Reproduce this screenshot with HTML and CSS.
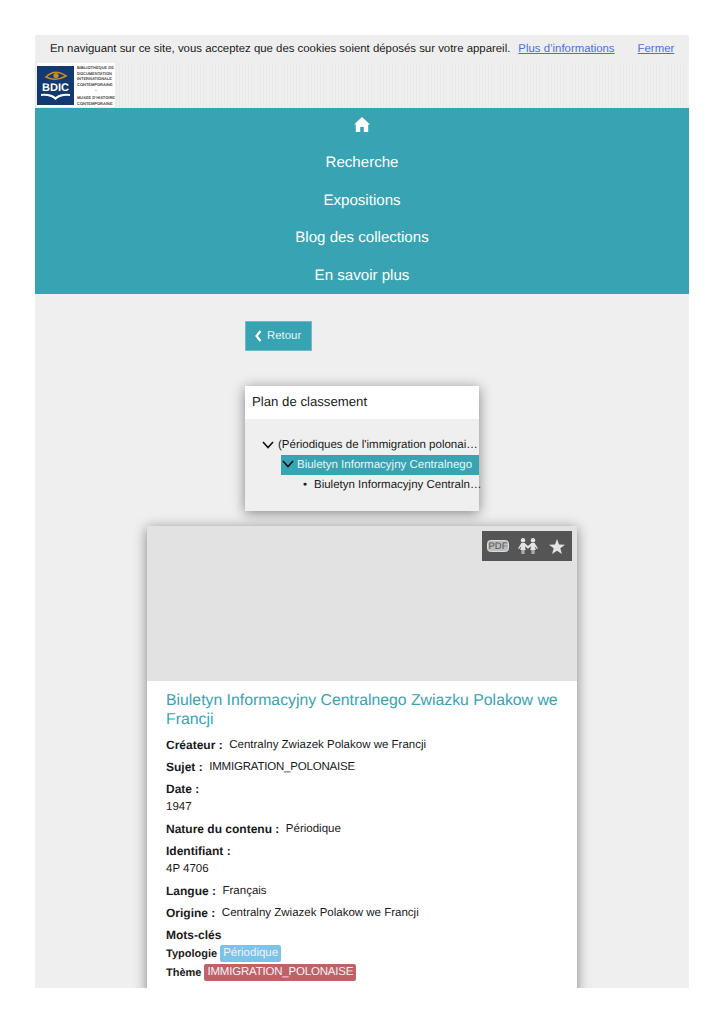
FILE: index.html
```html
<!DOCTYPE html>
<html lang="fr">
<head>
    <meta charset="UTF-8">
    <title>Biuletyn Informacyjny Centralnego Zwiazku Polakow we Francji</title>
    <link rel="stylesheet" href="styles.css">
</head>
<body>
<div class="page">

    <div class="cookies">
        <span class="cookies-text">En naviguant sur ce site, vous acceptez que des cookies soient déposés sur votre appareil.</span>
        <a href="#" class="cookies-more">Plus d’informations</a>
        <a href="#" class="cookies-close">Fermer</a>
    </div>

    <div class="header">
        <div class="logo">
            <svg class="logo-mark" width="37" height="39" viewBox="0 0 37 39">
                <rect width="37" height="39" fill="#123a70"/>
                <path d="M9 11 Q18 2 29 10 Q19 16 9 11Z" fill="none" stroke="#c98a2b" stroke-width="1.6"/>
                <circle cx="19" cy="9.5" r="2.6" fill="#c98a2b"/>
                <text x="18.5" y="25" class="logo-bdic">BDIC</text>
                <path d="M4 28 Q13 27 18.5 31 Q24 27 33 28 L33 30 Q24 29 18.5 34 Q13 29 4 30Z" fill="#fff"/>
            </svg>
            <div class="logo-text">
                <div>BIBLIOTHEQUE DE</div>
                <div>DOCUMENTATION</div>
                <div>INTERNATIONALE</div>
                <div>CONTEMPORAINE</div>
                <div class="logo-dot">•</div>
                <div>MUSEE D'HISTOIRE</div>
                <div>CONTEMPORAINE</div>
            </div>
        </div>
    </div>

    <div class="nav">
        <a href="#" class="nav-home">
            <svg width="16" height="15" viewBox="0 0 16 15">
                <path d="M8 0 L16 7.6 L14.2 7.6 L14.2 15 L9.8 15 L9.8 10 L6.2 10 L6.2 15 L1.8 15 L1.8 7.6 L0 7.6Z" fill="#fff"/>
            </svg>
        </a>
        <a href="#">Recherche</a>
        <a href="#">Expositions</a>
        <a href="#">Blog des collections</a>
        <a href="#">En savoir plus</a>
    </div>

    <div class="content">
        <a href="#" class="btn-back">
            <svg width="7" height="12" viewBox="0 0 7 12">
                <path d="M5.5 1 L1.5 6 L5.5 11" fill="none" stroke="#fff" stroke-width="2.2"/>
            </svg>
            Retour
        </a>

        <div class="tree">
            <div class="tree-title">Plan de classement</div>
            <div class="tree-body">
                <div class="tree-row tree-level1">
                    <svg class="chevron" width="12" height="8" viewBox="0 0 12 8"><path d="M1 1 L6 6.5 L11 1" fill="none" stroke="#111" stroke-width="1.6"/></svg>
                    <span>(Périodiques de l'immigration polonai…</span>
                </div>
                <div class="tree-row tree-level2">
                    <svg class="chevron" width="12" height="8" viewBox="0 0 12 8"><path d="M1 1 L6 6.5 L11 1" fill="none" stroke="#111" stroke-width="1.6"/></svg>
                    <span>Biuletyn Informacyjny Centralnego</span>
                </div>
                <div class="tree-row tree-level3">
                    <span class="tree-bullet">•</span>
                    <span>Biuletyn Informacyjny Centraln…</span>
                </div>
            </div>
        </div>

        <div class="notice">
            <div class="notice-image">
                <div class="tools">
                    <svg width="22" height="12" viewBox="0 0 22 12">
                        <rect x="0.5" y="0.5" width="21" height="11" rx="3" fill="#bdbdbd" stroke="#dcdcdc"/>
                        <text x="11" y="9.4" class="tools-pdf">PDF</text>
                    </svg>
                    <svg width="20" height="16" viewBox="0 0 20 16">
                        <g fill="#e4e4e4">
                            <circle cx="5" cy="2.2" r="2.2"/>
                            <circle cx="15" cy="2.2" r="2.2"/>
                            <path d="M3.4 5 H6.6 L10 8 L13.4 5 H16.6 L20 10.4 L18.9 11.1 L16.8 8.2 L17.8 12 H16.4 V16 H15.4 V12 H14.6 V16 H13.6 V12 H12.2 L13.2 8.2 L10 10.8 L6.8 8.2 L7.8 12 H6.4 V16 H5.4 V12 H4.6 V16 H3.6 V12 H2.2 L3.2 8.2 L1.1 11.1 L0 10.4Z"/>
                        </g>
                    </svg>
                    <svg width="16" height="15" viewBox="0 0 16 15">
                        <path d="M8 0 L10 5.4 L16 5.7 L11.3 9.3 L12.9 15 L8 11.8 L3.1 15 L4.7 9.3 L0 5.7 L6 5.4Z" fill="#e4e4e4"/>
                    </svg>
                </div>
            </div>
            <div class="notice-body">
                <h1>Biuletyn Informacyjny Centralnego Zwiazku Polakow we Francji</h1>
                <div class="field"><span class="field-name">Créateur :</span><span class="field-value">Centralny Zwiazek Polakow we Francji</span></div>
                <div class="field"><span class="field-name">Sujet :</span><span class="field-value caps">IMMIGRATION_POLONAISE</span></div>
                <div class="field field-block"><div class="field-name">Date :</div><div class="field-value">1947</div></div>
                <div class="field"><span class="field-name">Nature du contenu :</span><span class="field-value">Périodique</span></div>
                <div class="field field-block"><div class="field-name">Identifiant :</div><div class="field-value">4P 4706</div></div>
                <div class="field"><span class="field-name">Langue :</span><span class="field-value">Français</span></div>
                <div class="field"><span class="field-name">Origine :</span><span class="field-value">Centralny Zwiazek Polakow we Francji</span></div>
                <div class="keywords-title">Mots-clés</div>
                <div class="keyword-row"><span class="keyword-name">Typologie</span><span class="tag tag-blue">Périodique</span></div>
                <div class="keyword-row"><span class="keyword-name">Thème</span><span class="tag tag-red caps">IMMIGRATION_POLONAISE</span></div>
            </div>
        </div>
    </div>

</div>
</body>
</html>
```

FILE: styles.css
```css
html, body {
    margin: 0;
    padding: 0;
    background-color: #fff;
}

body {
    font-family: "Liberation Sans", Arial, sans-serif;
    color: #1a1a1a;
    padding: 35px 35px 0;
    text-rendering: geometricPrecision;
}

.page {
    width: 654px;
    height: 953px;
    overflow: hidden;
    background-color: #efefef;
}

.cookies {
    height: 28px;
    background-color: #eee;
    font-size: 11.4px;
    line-height: 28px;
    padding-left: 15px;
    display: flex;
    white-space: nowrap;
}

.cookies a {
    color: #4a6fe0;
}

.cookies-more {
    margin-left: 8px;
}

.cookies-close {
    margin-left: 23px;
}

.header {
    height: 45px;
    box-sizing: border-box;
    padding: 0 0 0 2px;
    background-color: #ececec;
    background-image: repeating-linear-gradient(90deg, #e9e9e9 0, #e9e9e9 1px, #efefef 1px, #efefef 3px);
}

.logo {
    width: 78px;
    height: 44px;
    background-color: #fff;
    display: flex;
    box-sizing: border-box;
}

.logo-mark {
    margin-top: 3px;
}

.logo-bdic {
    font-size: 11px;
    font-weight: bold;
    fill: #fff;
    text-anchor: middle;
}

.logo-text {
    margin: 2px 0 0 3px;
    font-size: 4px;
    line-height: 5.5px;
    font-weight: bold;
    color: #444;
    white-space: nowrap;
}

.logo-dot {
    color: #e08020;
    text-align: center;
    height: 8px;
    line-height: 8px;
}

.nav {
    height: 186px;
    background-color: #38a3b2;
    display: flex;
    flex-direction: column;
    align-items: center;
}

.nav a {
    color: #fff;
    text-decoration: none;
    font-size: 15.1px;
    height: 37.4px;
    line-height: 38px;
}

.nav .nav-home {
    height: 37px;
    line-height: 0;
    padding-top: 9px;
    box-sizing: border-box;
}

.content {
    padding-top: 27px;
    display: flex;
    flex-direction: column;
    align-items: center;
}

.btn-back {
    align-self: flex-start;
    margin-left: 210px;
    width: 67px;
    height: 30px;
    box-sizing: border-box;
    background-color: #38a3b2;
    border: 1px solid #6fbcc8;
    color: #e8f6f8;
    font-size: 11.4px;
    text-decoration: none;
    display: flex;
    align-items: center;
    padding: 0 0 1px 9px;
    gap: 5px;
}

.tree {
    width: 234px;
    height: 125px;
    margin-top: 35px;
    background-color: #efefef;
    box-shadow: 0 2px 12px rgba(0, 0, 0, 0.45);
}

.tree-title {
    height: 33px;
    line-height: 32px;
    background-color: #fff;
    padding-left: 7px;
    font-size: 13.2px;
}

.tree-body {
    padding-top: 15px;
    font-size: 11.5px;
}

.tree-row {
    display: flex;
    align-items: center;
    white-space: nowrap;
}

.chevron {
    flex-shrink: 0;
}

.tree-level1 {
    height: 21px;
    padding-left: 17px;
}

.tree-level1 .chevron {
    margin-right: 4px;
}

.tree-level2 {
    height: 20px;
    margin-left: 36px;
    padding-left: 1px;
    background-color: #38a3b2;
    color: #e8f6f8;
}

.tree-level2 .chevron {
    margin: -3px 3px 0 0;
}

.tree-level3 {
    height: 20px;
    padding-left: 58px;
}

.tree-bullet {
    width: 11px;
    flex-shrink: 0;
}

.notice {
    width: 430px;
    margin-top: 15px;
    background-color: #fff;
    box-shadow: 0 2px 12px rgba(0, 0, 0, 0.45);
}

.notice-image {
    height: 155px;
    background-color: #e2e2e2;
    display: flex;
    justify-content: flex-end;
    align-items: flex-start;
    padding-top: 5px;
    padding-right: 5px;
    box-sizing: border-box;
}

.tools {
    width: 90px;
    height: 30px;
    background-color: #555;
    display: flex;
    align-items: center;
    padding-left: 5px;
    box-sizing: border-box;
    gap: 9px;
}

.tools svg:last-child {
    margin-left: 2px;
}

.tools-pdf {
    font-size: 9.5px;
    fill: #555;
    text-anchor: middle;
}

.notice-body {
    padding: 10px 10px 40px 19px;
}

.notice-body h1 {
    margin: 0 0 9px;
    font-size: 15.8px;
    font-weight: normal;
    line-height: 19px;
    color: #38a3b2;
}

.field {
    font-size: 11.5px;
    margin-bottom: 6px;
    min-height: 16px;
    display: flex;
    align-items: flex-start;
    line-height: 14px;
}

.field-name {
    font-size: 12px;
    font-weight: bold;
    margin-right: 6.5px;
}

.field-block {
    display: block;
    margin-bottom: 8px;
}

.field-block .field-name {
    margin-bottom: 4px;
}

.caps {
    letter-spacing: -0.2px;
}

.keywords-title {
    font-size: 12px;
    font-weight: bold;
    line-height: 14px;
    margin-bottom: 2px;
}

.keyword-row {
    display: flex;
    align-items: center;
    height: 19px;
    font-size: 12px;
}

.keyword-name {
    font-weight: bold;
    font-size: 11px;
    margin-right: 3px;
}

.tag {
    padding: 0 3px;
    height: 17px;
    line-height: 17px;
    border-radius: 2px;
    color: #f2f2f8;
    font-size: 11.5px;
}

.tag-blue {
    background-color: #7cc3ea;
}

.tag-red {
    background-color: #bf6167;
}
```
